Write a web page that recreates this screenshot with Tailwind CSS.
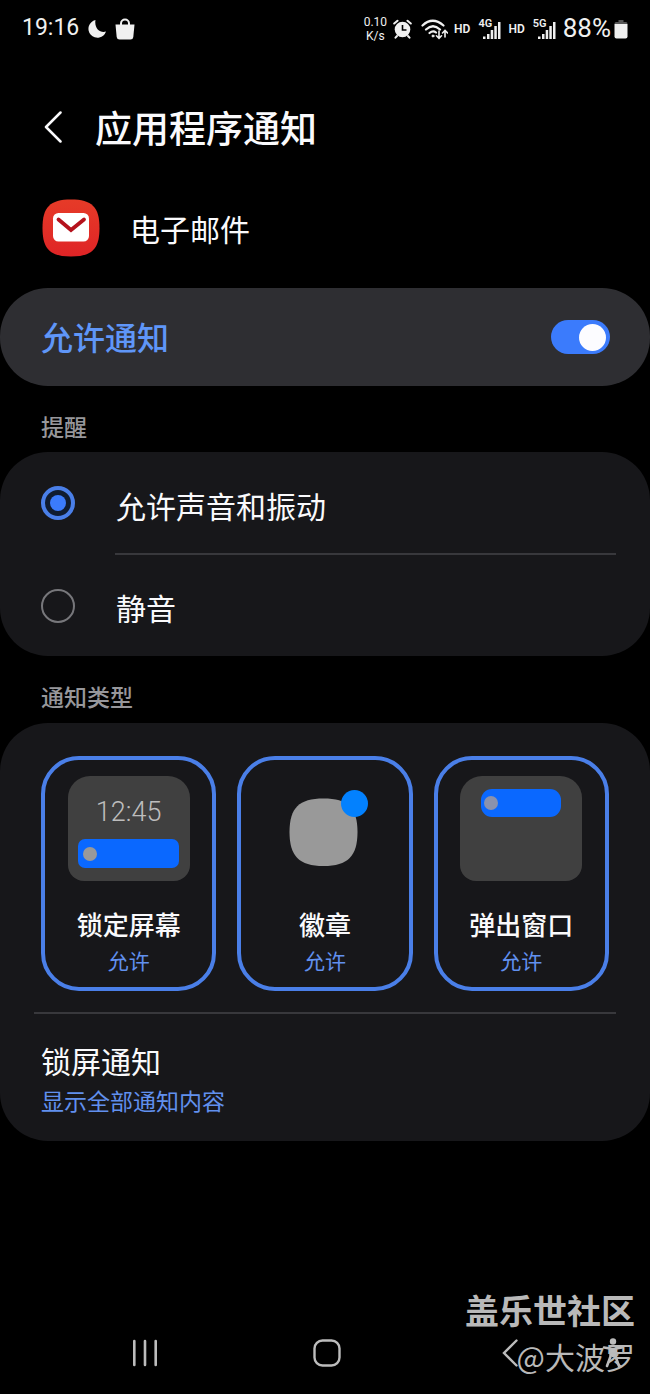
<!DOCTYPE html>
<html lang="zh-CN">
<head>
    <meta charset="UTF-8">
    <meta name="viewport" content="width=device-width, initial-scale=1.0">
    <title>应用程序通知</title>
    <script src="https://cdn.jsdelivr.net/npm/@tailwindcss/browser@4"></script>
</head>
<body class="bg-black text-[#fafafc] font-[Roboto,'Noto_Sans_CJK_SC',sans-serif]">
    <div class="relative min-h-screen flex flex-col">

        <!-- Status bar -->
        <div class="flex items-center justify-between h-14 px-[22px] pt-px text-[#f0f0f0]">
            <div class="flex items-center">
                <span class="text-[23px]">19:16</span>
                <svg class="ml-[9px] w-[19px] h-5" viewBox="0 0 19 20" fill="currentColor"><path d="M7.5 1A9 9 0 1 0 18 12.6C12 14.500 6 9 7.500 1Z"/></svg>
                <svg class="ml-[8px] w-5 h-[22px]" viewBox="0 0 20 22"><path d="M6 8V5.500a4 4 0 0 1 8 0V8" fill="none" stroke="currentColor" stroke-width="2"/><path d="M.5 6.500h19l-1.200 12.500q-.3 2.500-2.800 2.500h-11q-2.500 0-2.800-2.500z" fill="currentColor"/></svg>
            </div>
            <div class="flex items-center">
                <span class="text-[12px] leading-[14px] text-center">0.10<br>K/s</span>
                <svg class="ml-[6px] w-[19px] h-5" viewBox="0 0 19 20"><circle cx="9.500" cy="10.500" r="7.800" fill="currentColor"/><g fill="none" stroke="currentColor" stroke-width="2" stroke-linecap="round"><path d="M1.200 4.500 4.500 1.700M17.800 4.500 14.500 1.700M4 17l-1.500 1.700M15 17l1.500 1.700"/></g><path d="M9.500 6v5h4" fill="none" stroke="#000" stroke-width="1.600"/></svg>
                <svg class="ml-[9px] w-[27px] h-[22px]" viewBox="0 0 27 22" fill="none" stroke="currentColor" stroke-width="2.200" stroke-linecap="round"><path d="M1.500 7.500q10-9.500 21 0M5 11.500q7-6.500 14 0M8.500 15q3.500-3 6.500-.5"/><circle cx="12" cy="18" r="1" fill="currentColor" stroke-width="1"/><path d="M18 13v7M15.500 17.800 18 20.300l2.500-2.500M24 19v-6.500M21.500 15 24 12.500l2.500 2.500" stroke-width="1.600"/></svg>
                <span class="ml-[6px] text-[12px] font-semibold">HD</span>
                <div class="ml-[8px] relative w-[23px] h-[22px]">
                    <span class="absolute left-0 top-0 text-[11px] leading-[11px] font-semibold">4G</span>
                    <svg class="w-[23px] h-[22px]" viewBox="0 0 23 22" fill="currentColor"><path d="M5 18.500h2.500V21H5zM9 16h2.500v5H9zM12.700 12h2.500v9h-2.500zM16.300 8h2.500v13h-2.500zM20 4h2.500v17H20z"/></svg>
                </div>
                <span class="ml-[7px] text-[12px] font-semibold">HD</span>
                <div class="ml-[8px] relative w-[23px] h-[22px]">
                    <span class="absolute left-0 top-0 text-[11px] leading-[11px] font-semibold">5G</span>
                    <svg class="w-[23px] h-[22px]" viewBox="0 0 23 22" fill="currentColor"><path d="M5 18.500h2.500V21H5zM9 16h2.500v5H9zM12.700 12h2.500v9h-2.500zM16.300 8h2.500v13h-2.500zM20 4h2.500v17H20z"/></svg>
                </div>
                <span class="ml-[7px] text-[26px]">88%</span>
                <svg class="ml-[3px] w-[14px] h-5" viewBox="0 0 14 20"><path d="M4.500 1h5v2H12q1.500 0 1.500 2H.5q0-2 1.500-2h2.500z" fill="#555"/><path d="M.5 5h13v12.500q0 2-2 2h-9q-2 0-2-2z" fill="currentColor"/></svg>
            </div>
        </div>

        <!-- Header -->
        <header class="flex items-center h-[142px] pl-11">
            <button type="button" aria-label="返回">
                <svg class="w-[18px] h-8" viewBox="0 0 18 32" fill="none" stroke="currentColor" stroke-width="2.500" stroke-linecap="round" stroke-linejoin="round"><path d="M16.500 1.500 2 16l14.500 14.500"/></svg>
            </button>
            <h1 class="ml-[33px] pt-2 text-[37px] font-medium">应用程序通知</h1>
        </header>

        <!-- App -->
        <div class="flex items-center h-[90px] pb-[30px] pl-[42px]">
            <svg class="w-[58px] h-[58px]" viewBox="0 0 58 58">
                <defs><linearGradient id="mail" x1="0" y1="0" x2="0" y2="1"><stop offset="0" stop-color="#e63b28"/><stop offset="1" stop-color="#df2426"/></linearGradient></defs>
                <path d="M29 .5C50 .5 57.500 8 57.500 29S50 57.500 29 57.500.5 50 .5 29 8 .5 29 .5Z" fill="url(#mail)"/>
                <rect x="11" y="14" width="36" height="28.500" rx="5.500" fill="#fff"/>
                <path d="M16.500 20.500l12.500 10.500L42 20.500" fill="none" stroke="#b5121c" stroke-width="3.800" stroke-linecap="round"/>
            </svg>
            <span class="ml-[30px] pt-1 text-[30px]">电子邮件</span>
        </div>

        <!-- Master switch -->
        <label class="flex items-center justify-between h-[98px] pl-[41px] pr-10 rounded-[48px] bg-[#2e2e32]">
            <span class="pt-1 text-[32px] font-medium text-[#5f96f8]">允许通知</span>
            <input type="checkbox" role="switch" checked class="appearance-none w-[59px] h-[34px] rounded-full bg-[#5a5a5e] checked:bg-[#3b7bfc] p-1 flex items-center checked:justify-end before:block before:w-[27px] before:h-[27px] before:rounded-full before:bg-[#fcfcff]">
        </label>

        <!-- Alert -->
        <h2 class="h-[66px] px-[41px] pt-5 flex items-center text-[23px] font-medium text-[#97979b]">提醒</h2>
        <div class="rounded-[48px] bg-[#17171a]">
            <label class="flex items-center h-[102px] pl-[41px]">
                <input type="radio" name="alert" checked class="appearance-none w-[34px] h-[34px] rounded-full border-2 border-[#77777b] checked:border-[4px] checked:border-[#4a7fe8] checked:bg-[#101c30] flex items-center justify-center checked:before:block checked:before:w-4 checked:before:h-4 checked:before:rounded-full checked:before:bg-[#3b7bfc]">
                <span class="ml-[41px] pt-2 text-[30px]">允许声音和振动</span>
            </label>
            <div class="ml-[115px] mr-[34px] -mt-px h-[2px] bg-[#38383c]"></div>
            <label class="flex items-center h-[101px] pl-[41px]">
                <input type="radio" name="alert" class="appearance-none w-[34px] h-[34px] rounded-full border-2 border-[#77777b] checked:border-[4px] checked:border-[#4a7fe8] checked:bg-[#101c30] flex items-center justify-center checked:before:block checked:before:w-4 checked:before:h-4 checked:before:rounded-full checked:before:bg-[#3b7bfc]">
                <span class="ml-[41px] pt-2 text-[30px]">静音</span>
            </label>
        </div>

        <!-- Notification types -->
        <h2 class="h-[67px] px-[41px] pt-5 flex items-center text-[23px] font-medium text-[#97979b]">通知类型</h2>
        <div class="rounded-[48px] bg-[#17171a] pt-[33px] pb-[21px]">
            <div class="grid grid-cols-3 gap-[21px] px-[41px]">
                <button type="button" aria-pressed="true" class="flex flex-col items-center h-[235px] pt-4 rounded-[38px] border-4 border-[#4a7fe8]">
                    <span class="flex flex-col items-center w-[122px] h-[105px] pt-4 rounded-t-[22px] rounded-b-[16px] bg-[#404040]">
                        <span class="text-[27px] leading-10 font-light text-[#bdbdbd]">12:45</span>
                        <span class="mt-[7px] flex items-center w-[101px] h-[29px] pl-[5px] rounded-[7px] bg-[#0a68ff]">
                            <span class="w-[14px] h-[14px] rounded-full bg-[#999]"></span>
                        </span>
                    </span>
                    <span class="mt-[25px] text-[26px] leading-10 font-medium">锁定屏幕</span>
                    <span class="text-[21px] leading-8 text-[#6190ee]">允许</span>
                </button>
                <button type="button" aria-pressed="true" class="flex flex-col items-center h-[235px] pt-4 rounded-[38px] border-4 border-[#4a7fe8]">
                    <svg class="w-[122px] h-[105px]" viewBox="0 0 122 105">
                        <path d="M59.500 22.500C84 22.500 93.500 32 93.500 56S84 90 59.500 90 25.500 80 25.500 56 35 22.500 59.500 22.500Z" fill="#999"/>
                        <circle cx="90.500" cy="27.500" r="13.500" fill="#0381fe"/>
                    </svg>
                    <span class="mt-[25px] text-[26px] leading-10 font-medium">徽章</span>
                    <span class="text-[21px] leading-8 text-[#6190ee]">允许</span>
                </button>
                <button type="button" aria-pressed="true" class="flex flex-col items-center h-[235px] pt-4 rounded-[38px] border-4 border-[#4a7fe8]">
                    <span class="flex flex-col items-center w-[122px] h-[105px] pt-[13px] rounded-t-[22px] rounded-b-[16px] bg-[#404040]">
                        <span class="flex items-center w-[80px] h-[28px] pl-[3px] rounded-[11px] bg-[#0a68ff]">
                            <span class="w-[14px] h-[14px] rounded-full bg-[#8a92ad]"></span>
                        </span>
                    </span>
                    <span class="mt-[25px] text-[26px] leading-10 font-medium">弹出窗口</span>
                    <span class="text-[21px] leading-8 text-[#6190ee]">允许</span>
                </button>
            </div>
            <div class="mx-[34px] mt-[21px] h-[2px] bg-[#38383c]"></div>
            <a href="#" class="block px-[41px] pt-[27px]">
                <span class="block text-[30px] leading-[44px]">锁屏通知</span>
                <span class="block pt-px text-[23px] leading-[34px] text-[#6190ee]">显示全部通知内容</span>
            </a>
        </div>

        <!-- Navigation bar -->
        <nav class="mt-auto flex items-center h-[82px] pl-[54px] pr-[25px] text-[#bcbcbc]">
            <button type="button" aria-label="最近" class="flex-1 flex justify-center">
                <svg class="w-[26px] h-7" viewBox="0 0 26 28" stroke="currentColor" stroke-width="2.600" stroke-linecap="round"><path d="M2.300 2v24M13 2v24M23.700 2v24"/></svg>
            </button>
            <button type="button" aria-label="主页" class="flex-1 flex justify-center">
                <svg class="w-7 h-7" viewBox="0 0 28 28" fill="none" stroke="currentColor" stroke-width="2.400"><rect x="1.500" y="1.500" width="25" height="25" rx="8"/></svg>
            </button>
            <button type="button" aria-label="返回" class="flex-1 flex justify-center">
                <svg class="w-4 h-7" viewBox="0 0 16 28" fill="none" stroke="currentColor" stroke-width="2.400" stroke-linecap="round"><path d="M14.500 1.500 2 14l12.500 12.500"/></svg>
            </button>
            <button type="button" aria-label="辅助功能" class="w-6">
                <svg class="w-6 h-8" viewBox="0 0 24 32" fill="none" stroke="currentColor" stroke-width="2.600" stroke-linecap="round" stroke-linejoin="round"><circle cx="12" cy="4.500" r="3.200" fill="currentColor" stroke="none"/><path d="M3 10.500l9 1.500 9-1.500M12 12v7M9.500 12.500v7L6 29M14.500 12.500v7L18 29"/></svg>
            </button>
        </nav>

        <!-- Watermark -->
        <div class="absolute right-[15px] bottom-4 text-right text-[#b9b9b9] pointer-events-none">
            <p class="text-[34px] leading-[44px] font-bold">盖乐世社区</p>
            <p class="text-[30px] leading-[44px] font-[Noto_Sans_CJK_SC]">@大波罗</p>
        </div>
    </div>
</body>
</html>
